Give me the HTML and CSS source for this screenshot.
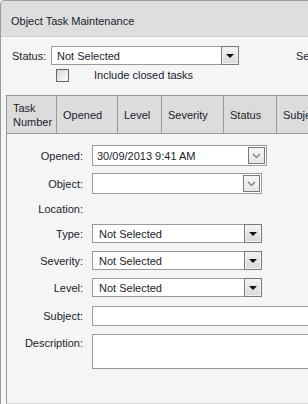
FILE: index.html
```html
<!DOCTYPE html>
<html lang="en">
<head>
    <meta charset="UTF-8">
    <title>Object Task Maintenance</title>
    <link rel="stylesheet" href="styles.css">
</head>
<body>
    <div class="window">
        <div class="title">Object Task Maintenance</div>

        <!-- filters -->
        <div class="filters">
            <div class="filter-row">
                <span class="filter-label">Status:</span>
                <div class="select status-select">
                    <span class="select-text">Not Selected</span>
                    <span class="arrow-btn"><span class="tri"></span></span>
                </div>
                <span class="search-label">Search:</span>
            </div>
            <div class="check-row">
                <span class="checkbox"></span>
                <span class="check-label">Include closed tasks</span>
            </div>
        </div>

        <!-- task grid + detail -->
        <div class="panel">
            <div class="grid-header">
                <div class="col col-number">Task<br>Number</div>
                <div class="col col-opened">Opened</div>
                <div class="col col-level">Level</div>
                <div class="col col-severity">Severity</div>
                <div class="col col-status">Status</div>
                <div class="col col-subject">Subject</div>
            </div>

            <div class="form">
                <div class="row row-opened">
                    <span class="label">Opened:</span>
                    <div class="field combo combo-opened">
                        <span class="field-text">30/09/2013 9:41 AM</span>
                        <span class="chev-btn">
                            <svg width="9" height="6" viewBox="0 0 9 6"><polyline points="1,1 4.5,4.5 8,1" fill="none" stroke="#777" stroke-width="1.2"/></svg>
                        </span>
                    </div>
                </div>
                <div class="row row-object">
                    <span class="label">Object:</span>
                    <div class="field combo combo-object">
                        <span class="chev-btn">
                            <svg width="9" height="6" viewBox="0 0 9 6"><polyline points="1,1 4.5,4.5 8,1" fill="none" stroke="#777" stroke-width="1.2"/></svg>
                        </span>
                    </div>
                </div>
                <div class="row row-location">
                    <span class="label">Location:</span>
                </div>
                <div class="row row-select">
                    <span class="label">Type:</span>
                    <div class="select form-select">
                        <span class="select-text">Not Selected</span>
                        <span class="arrow-btn"><span class="tri"></span></span>
                    </div>
                </div>
                <div class="row row-select">
                    <span class="label">Severity:</span>
                    <div class="select form-select">
                        <span class="select-text">Not Selected</span>
                        <span class="arrow-btn"><span class="tri"></span></span>
                    </div>
                </div>
                <div class="row row-select row-level">
                    <span class="label">Level:</span>
                    <div class="select form-select">
                        <span class="select-text">Not Selected</span>
                        <span class="arrow-btn"><span class="tri"></span></span>
                    </div>
                </div>
                <div class="row row-subject">
                    <span class="label">Subject:</span>
                    <div class="field text-field"></div>
                </div>
                <div class="row row-description">
                    <span class="label">Description:</span>
                    <div class="field text-area"></div>
                </div>
            </div>
        </div>
    </div>
</body>
</html>
```
FILE: styles.css
```css
html, body {
    margin: 0;
    padding: 0;
}
body {
    font-family: "Liberation Sans", Arial, sans-serif;
    font-size: 11px;
    color: #1c1c2c;
    background: #f5f5f5;
    overflow: hidden;
    width: 308px;
    height: 404px;
}
.window {
    width: 460px;
    height: 420px;
    border: 1px solid #9a9a9a;
    border-radius: 4px 4px 0 0;
    background: #f5f5f5;
    box-sizing: border-box;
}
.title {
    height: 31px;
    line-height: 32px;
    padding: 4px 0 0 10px;
    background: #dedede;
    border-bottom: 1px solid #d0d0d0;
    border-radius: 3px 3px 0 0;
}

/* filters */
.filters {
    padding: 9px 0 0 11px;
}
.filter-row {
    display: flex;
    align-items: center;
    height: 19px;
}
.filter-label {
    width: 39px;
    padding-top: 1px;
}
.search-label {
    margin-left: 57px;
}
.check-row {
    display: flex;
    align-items: center;
    margin-top: 4px;
    height: 13px;
}
.checkbox {
    width: 11px;
    height: 11px;
    margin-left: 44px;
    border: 1px solid #666;
    background: linear-gradient(135deg, #d4d4d4, #ffffff);
}
.check-label {
    margin-left: 25px;
    margin-top: -1px;
}

/* selects */
.select {
    position: relative;
    display: flex;
    align-items: center;
    box-sizing: border-box;
    background: #fff;
    border: 1px solid #999;
    height: 19px;
}
.status-select {
    width: 188px;
    padding-left: 5px;
}
.form-select {
    width: 170px;
    padding-left: 6px;
}
.select-text {
    flex: 1;
    padding-top: 1px;
}
.arrow-btn {
    position: absolute;
    right: -1px;
    top: -1px;
    width: 18px;
    height: 19px;
    box-sizing: border-box;
    border: 1px solid #7a7a7a;
    box-shadow: inset 0 0 0 1px #f2f2f2;
    background: linear-gradient(#f4f4f4, #d8d8d8);
    display: flex;
    align-items: center;
    justify-content: center;
}
.tri {
    width: 0;
    height: 0;
    border-left: 4px solid transparent;
    border-right: 4px solid transparent;
    border-top: 4px solid #111;
    margin-top: 1px;
}

/* panel */
.panel {
    margin: 13px 0 0 5px;
    height: 309px;
    border: 1px solid #999;
    border-bottom-color: #dadada;
    border-right: none;
    box-sizing: border-box;
    background: #f5f5f5;
}
.grid-header {
    display: flex;
    height: 38px;
    background: #dcdcdc;
    border-bottom: 1px solid #999;
    box-sizing: border-box;
}
.col {
    display: flex;
    align-items: center;
    padding-left: 6px;
    border-right: 1px solid #999;
    box-sizing: border-box;
    line-height: 14px;
    white-space: nowrap;
}
.col-number { width: 50px; }
.col-opened { width: 61px; }
.col-level { width: 44px; }
.col-severity { width: 62px; }
.col-status { width: 53px; }
.col-subject { width: 90px; }

/* detail form */
.form {
    padding-top: 11px;
}
.row {
    display: flex;
    align-items: center;
}
.label {
    width: 76px;
    margin-right: 9px;
    text-align: right;
}
.field {
    position: relative;
    box-sizing: border-box;
    background: #fff;
    border: 1px solid #9a9a9a;
}
.combo {
    height: 21px;
    display: flex;
    align-items: center;
}
.combo-opened {
    width: 175px;
    padding-left: 4px;
}
.combo-object {
    width: 170px;
}
.row-object {
    margin-top: 7px;
}
.chev-btn {
    position: absolute;
    right: 1px;
    top: 1px;
    width: 17px;
    height: 17px;
    box-sizing: border-box;
    border: 1px solid #7a7a7a;
    background: linear-gradient(#f7f7f7, #e6e6e6);
    display: flex;
    align-items: center;
    justify-content: center;
}
.row-location {
    margin-top: 7px;
    height: 16px;
}
.row-select {
    margin-top: 8px;
}
.row-location + .row-select {
    margin-top: 7px;
}
.row-subject {
    margin-top: 9px;
}
.text-field {
    width: 240px;
    height: 20px;
}
.row-description {
    margin-top: 8px;
    align-items: flex-start;
}
.row-description .label {
    padding-top: 3px;
}
.text-area {
    width: 240px;
    height: 35px;
}
```
